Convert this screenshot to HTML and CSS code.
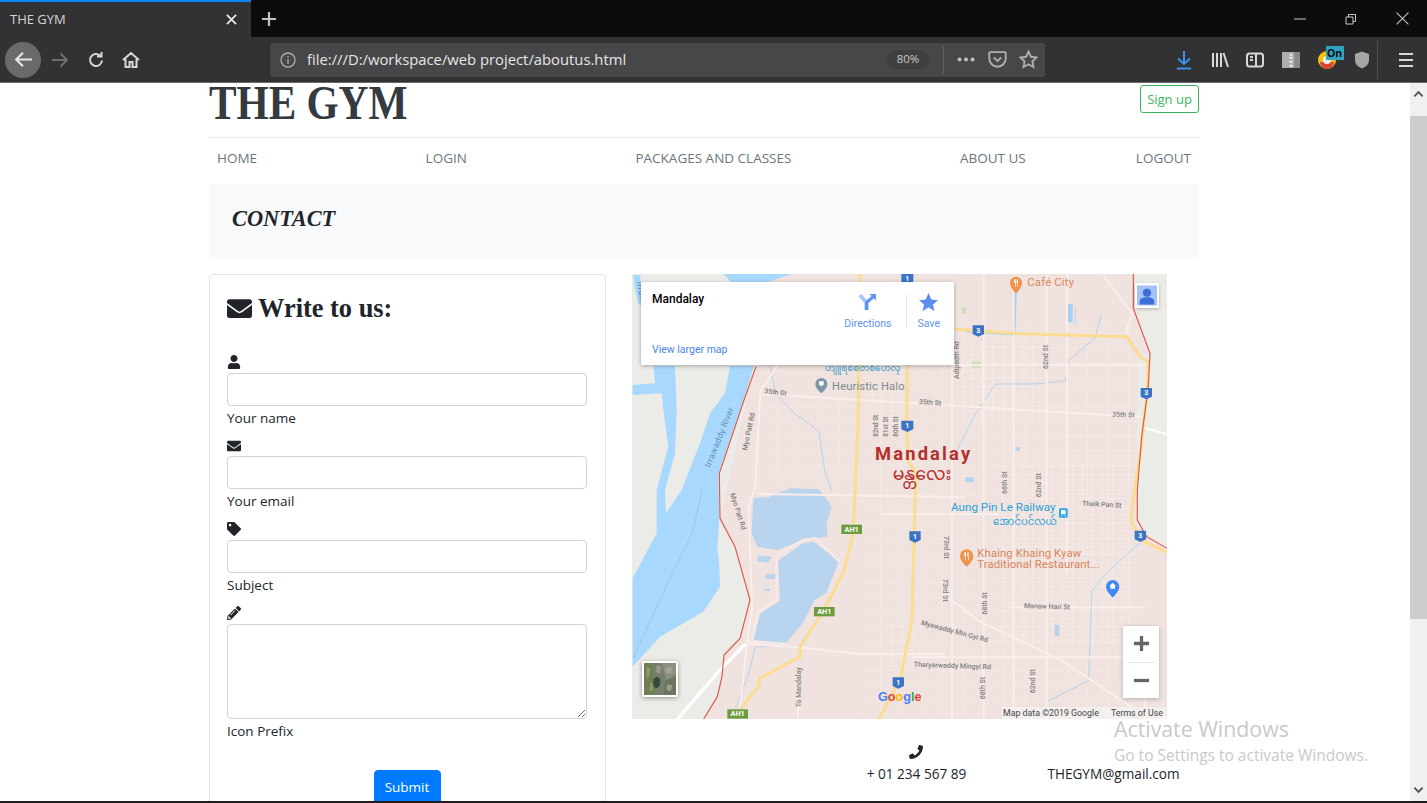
FILE: index.html
```html
<!DOCTYPE html>
<html lang="en">
<head>
<meta charset="utf-8">
<title>THE GYM</title>
<link rel="stylesheet" href="styles.css">
</head>
<body>
<div class="browser">
  <div class="tabbar">
    <div class="tab">
      <span class="tab-title">THE GYM</span>
      <svg class="ico tab-x" viewBox="0 0 12 12"><path d="M1 1l10 10M11 1L1 11"/></svg>
    </div>
    <svg class="ico new-tab" viewBox="0 0 16 16"><path d="M8 1v14M1 8h14"/></svg>
    <div class="win-controls">
      <svg class="ico win" viewBox="0 0 12 12"><path d="M0 6h12"/></svg>
      <svg class="ico win" viewBox="0 0 12 12"><path d="M1 4h7v7H1zM3.500 4V1.500h7v7H8"/></svg>
      <svg class="ico win" viewBox="0 0 12 12"><path d="M.5.500l11 11M11.500.500l-11 11"/></svg>
    </div>
  </div>
  <div class="toolbar">
    <div class="back-btn"><svg class="ico back" viewBox="0 0 18 16"><path d="M17 8H2M8.500 1.500L2 8l6.500 6.500"/></svg></div>
    <svg class="ico nav-ico dim" viewBox="0 0 18 16"><path d="M1 8h15M9.500 1.500L16 8l-6.500 6.500"/></svg>
    <svg class="ico nav-ico" viewBox="0 0 18 18"><path d="M15 9.500A6 6 0 1 1 13 4.500M14.500 1v4.500H10"/></svg>
    <svg class="ico nav-ico home" viewBox="0 0 18 18"><path d="M1 9l8-7 8 7M3.500 8v8h4v-5h3v5h4V8"/></svg>
    <div class="urlbar">
      <svg class="ico info" viewBox="0 0 16 16"><circle cx="8" cy="8" r="7"/><path d="M8 7v5M8 4v1.500"/></svg>
      <span class="url">file:///D:/workspace/web project/aboutus.html</span>
      <span class="zoom-pill">80%</span>
      <span class="url-sep"></span>
      <svg class="dots" viewBox="0 0 18 4"><circle cx="2.500" cy="2" r="2"/><circle cx="9" cy="2" r="2"/><circle cx="15.500" cy="2" r="2"/></svg>
      <svg class="ico url-ico" viewBox="0 0 18 18"><path d="M2 2h14a.8.800 0 0 1 .8.800V8a7.800 7.800 0 0 1-15.600 0V2.800A.8.800 0 0 1 2 2zM5.500 7L9 10.500 12.500 7"/></svg>
      <svg class="ico url-ico" viewBox="0 0 18 18"><path d="M9 1.500l2.300 4.900 5.300.7-3.900 3.700 1 5.300L9 13.500l-4.700 2.600 1-5.300-3.900-3.700 5.300-.7z"/></svg>
    </div>
    <div class="tools">
      <svg class="ico tool blue" viewBox="0 0 18 20"><path d="M9 1v13M3 8.500L9 14l6-5.500M2 18.500h14"/></svg>
      <svg class="ico tool" viewBox="0 0 18 18"><path d="M2 2v14M6 2v14M10 2v14M12.500 2L17 16"/></svg>
      <svg class="ico tool" viewBox="0 0 18 18"><rect x="1" y="2.500" width="16" height="13" rx="2.500"/><path d="M10 2.500v13M4 6h3M4 9h3"/></svg>
      <svg class="tool" viewBox="0 0 18 18"><rect y="1" width="18" height="16" fill="#b0b0b0"/><path d="M12 1h6v16h-6z" fill="#8c8c8c"/><path d="M8 3h2v1.500H8zM7 6h4l-2 2zM7 10h4l-2 2zM7 14h4l-2 2z" fill="#fff"/></svg>
      <span class="ext">
        <svg class="tool" viewBox="0 0 18 18"><circle cx="9" cy="9" r="9" fill="#f4c20d"/><path d="M2 11a7 7 0 0 0 14 0z" fill="#db4437"/><circle cx="9" cy="9" r="4" fill="#eee"/></svg>
        <span class="ext-badge">On</span>
      </span>
      <svg class="tool" viewBox="0 0 18 18"><path d="M9 .500l7 2.500v6c0 4-3 7-7 8.500C5 16 2 13 2 9V3z" fill="#a6a6a6"/></svg>
      <span class="tool-sep"></span>
      <svg class="ico tool last" viewBox="0 0 18 18"><path d="M2 3h14M2 9h14M2 15h14"/></svg>
    </div>
  </div>

  <div class="viewport">
    <div class="page">
      <div class="container">
        <header class="site-head">
          <h1 class="brand"><span class="brand-text">THE GYM</span></h1>
          <a class="signup">Sign up</a>
        </header>
        <nav class="site-nav">
          <div class="nav-main"><a>HOME</a><a>LOGIN</a><a>PACKAGES AND CLASSES</a><a>ABOUT US</a></div>
          <a>LOGOUT</a>
        </nav>
        <div class="jumbo"><h2>CONTACT</h2></div>
        <div class="contact-row">
          <section class="form-card">
            <h3 class="form-title">
              <svg class="fa fa-env" viewBox="0 0 512 512"><path d="M502.300 190.800c3.900-3.100 9.700-.2 9.700 4.700V400c0 26.500-21.500 48-48 48H48c-26.500 0-48-21.500-48-48V195.600c0-5 5.700-7.800 9.700-4.700 22.400 17.400 52.100 39.500 154.100 113.600 21.100 15.400 56.700 47.800 92.200 47.600 35.700.3 72-32.800 92.300-47.600 102-74.100 131.600-96.300 154-113.700zM256 320c23.200.4 56.600-29.200 73.400-41.400 132.700-96.300 142.800-104.700 173.400-128.700 5.800-4.500 9.200-11.500 9.200-18.900v-19c0-26.500-21.500-48-48-48H48C21.500 64 0 85.500 0 112v19c0 7.400 3.400 14.300 9.200 18.900 30.600 23.900 40.700 32.400 173.400 128.700 16.800 12.200 50.200 41.800 73.400 41.400z"/></svg>
              Write to us:
            </h3>
            <div class="field">
              <svg class="fa" viewBox="0 0 448 512"><path d="M224 256c70.700 0 128-57.300 128-128S294.700 0 224 0 96 57.300 96 128s57.300 128 128 128zm89.600 32h-16.700c-22.200 10.200-46.900 16-72.900 16s-50.600-5.800-72.900-16h-16.700C60.200 288 0 348.200 0 422.400V464c0 26.500 21.500 48 48 48h352c26.500 0 48-21.500 48-48v-41.600c0-74.200-60.200-134.400-134.400-134.400z"/></svg>
              <input class="control" type="text">
              <label class="cap">Your name</label>
            </div>
            <div class="field">
              <svg class="fa" viewBox="0 0 512 512"><path d="M502.300 190.800c3.900-3.100 9.700-.2 9.700 4.700V400c0 26.500-21.500 48-48 48H48c-26.500 0-48-21.500-48-48V195.600c0-5 5.700-7.800 9.700-4.700 22.400 17.400 52.100 39.500 154.100 113.600 21.100 15.400 56.700 47.800 92.200 47.600 35.700.3 72-32.800 92.300-47.600 102-74.100 131.600-96.300 154-113.700zM256 320c23.200.4 56.600-29.200 73.400-41.400 132.700-96.300 142.800-104.700 173.400-128.700 5.800-4.500 9.200-11.500 9.200-18.900v-19c0-26.500-21.500-48-48-48H48C21.500 64 0 85.500 0 112v19c0 7.400 3.400 14.300 9.200 18.900 30.600 23.900 40.700 32.400 173.400 128.700 16.800 12.200 50.200 41.800 73.400 41.400z"/></svg>
              <input class="control" type="text">
              <label class="cap">Your email</label>
            </div>
            <div class="field">
              <svg class="fa" viewBox="0 0 512 512"><path d="M0 252.118V48C0 21.490 21.490 0 48 0h204.118a48 48 0 0 1 33.941 14.059l211.882 211.882c18.745 18.745 18.745 49.137 0 67.882L293.823 497.941c-18.745 18.745-49.137 18.745-67.882 0L14.059 286.059A48 48 0 0 1 0 252.118zM112 64c-26.510 0-48 21.490-48 48s21.490 48 48 48 48-21.490 48-48-21.490-48-48-48z"/></svg>
              <input class="control" type="text">
              <label class="cap">Subject</label>
            </div>
            <div class="field field-area">
              <svg class="fa" viewBox="0 0 512 512"><path d="M497.900 142.100l-46.100 46.100c-4.700 4.700-12.300 4.700-17 0l-111-111c-4.700-4.700-4.700-12.300 0-17l46.100-46.100c18.700-18.700 49.100-18.700 67.900 0l60.100 60.100c18.800 18.700 18.800 49.100 0 67.900zM284.200 99.800L21.600 362.400.4 483.900c-2.900 16.400 11.400 30.600 27.800 27.800l121.500-21.300 262.600-262.600c4.700-4.700 4.700-12.300 0-17l-111-111c-4.800-4.700-12.400-4.700-17.100 0zM124.100 339.900c-5.500-5.500-5.500-14.300 0-19.800l154-154c5.500-5.500 14.300-5.500 19.800 0s5.500 14.300 0 19.800l-154 154c-5.500 5.500-14.300 5.500-19.800 0zM88 424h48v36.300l-64.500 11.300-31.100-31.100L51.700 376H88v48z"/></svg>
              <textarea class="control area"></textarea>
              <label class="cap">Icon Prefix</label>
            </div>
            <div class="submit-row"><button class="submit" type="button">Submit</button></div>
          </section>

          <section class="map-col">
            <div class="map">
              <svg class="map-svg" viewBox="0 0 1605 1335">
                <defs>
                  <pattern id="grid" width="62" height="44" patternUnits="userSpaceOnUse">
                    <path d="M0 0V44M0 0H62" stroke="#f8ece9" stroke-width="3" fill="none"/>
                  </pattern>
                  <pattern id="fine" width="30" height="24" patternUnits="userSpaceOnUse">
                    <path d="M0 0V24M0 0H30" stroke="#f9eeeb" stroke-width="2.500" fill="none"/>
                  </pattern>
                </defs>
                <rect width="1605" height="1335" fill="#efe2df"/>
                <!-- grey river plain, west -->
                <path d="M0 0H420L366 278L264 733L309 818L354 978L324 1093L276 1143L259 1268L215 1335H0z" fill="#ebebe8"/>
                <!-- grey plain, east -->
                <path d="M1509 0H1605V820L1548 785L1516 738V240L1554 238L1509 100z" fill="#ebebe8"/>
                <!-- street grids -->
                <rect x="690" y="150" width="830" height="1180" fill="url(#grid)"/>
                <rect x="400" y="370" width="280" height="260" fill="url(#grid)"/>
                <rect x="1100" y="560" width="400" height="560" fill="url(#fine)"/>
                <rect x="990" y="200" width="240" height="250" fill="url(#fine)"/>
                <rect x="770" y="1050" width="75" height="130" fill="url(#fine)"/>
                <rect x="700" y="330" width="90" height="140" fill="url(#fine)"/>
                <rect x="1300" y="480" width="220" height="220" fill="url(#grid)"/>
                <!-- river and channels -->
                <g transform="translate(-6,648)">
                  <path d="M70 -372H372L340 -270L310 -180L265 -50L268 85L262 170L268 230L270 290L220 365L90 440L8 530V265L80 130L80 0L115 -130L100 -240L95 -290L8 -285V-315L75 -320z" fill="#a9d8fe"/>
                  <path d="M135 -372H300L285 -290L240 -230L210 -140L155 0L108 70L105 0L135 -110L140 -240z" fill="#ebebe8"/>
                </g>
                <path d="M274 0H480L400 26H300z" fill="#a9d8fe"/>
                <path d="M4 3H24L32 70L29 98L18 85L8 40z" fill="#a9d8fe"/>
                <!-- lakes -->
                <g transform="translate(-6,648)" fill="#b8d4ee" stroke="#b8d4ee" stroke-width="8" stroke-linejoin="round">
                  <path d="M374 29L420 24L480 -1L566 2L601 50L586 100L588 136L520 146L440 176L384 166L369 130z"/>
                  <path d="M449 214L520 164L550 159L621 215L586 306L551 326L516 396L466 456L374 446L394 374L454 334z"/>
                </g>
                <g transform="translate(-6,648)" fill="#b8d4ee">
                  <path d="M385 198L425 200L415 218L382 215zM408 252L438 252L436 268L406 266zM403 296L420 296L420 302L403 302z"/>
                </g>
                <!-- small blue creeks -->
                <g fill="none" stroke="#b6d3ec" stroke-width="3">
                  <path d="M414 270L430 360L490 420L560 470L580 600L600 650"/>
                  <path d="M1150 40L1146 180L1000 170" stroke="#a9cfee" stroke-width="9"/>
                  <path d="M1330 100V150M1408 120L1390 190L1310 260L1300 320L1210 330L1090 330L1030 420L960 560"/>
                  <path d="M1530 800L1420 900L1380 950L1370 1220L1250 1280L1230 1330"/>
                  <path d="M300 1330L350 1200L370 1120L460 1110"/>
                </g>
                <rect x="1308" y="90" width="14" height="55" fill="#a9cfee"/>
                <rect x="1000" y="610" width="26" height="14" fill="#b6d3ec"/>
                <rect x="1150" y="520" width="14" height="10" fill="#b6d3ec"/>
                <rect x="1268" y="1052" width="14" height="34" fill="#b6d3ec"/>
                <rect x="990" y="100" width="12" height="20" fill="#cfe0b8"/>
                <rect x="1020" y="262" width="28" height="20" fill="#cfe0b8"/>
                <rect x="1040" y="392" width="18" height="12" fill="#cfe0b8"/>
                <!-- main streets -->
                <g fill="none" stroke="#faeeeb" stroke-width="6">
                  <path d="M700 273H1540M390 360L1540 430"/>
                  <path d="M960 200V1335M1055 0V1335M1145 40V1335M1244 0V1335M1305 0V900M1412 0L1500 120L1480 180"/>
                  <path d="M320 1335L345 1110L360 1000L350 700L370 640L385 350L440 270"/>
                  <path d="M350 1110L500 1120L680 1140L940 1140"/>
                  <path d="M375 660L1000 670M750 720H1100M1130 1000H1540M840 1150H1540"/>
                  <path d="M935 960L1040 1040L1290 1160L1500 1300"/>
                  <path d="M498 1180V1335"/>
                  <path d="M1540 1110V1335"/>
                  <path d="M134 1338L264 1188L340 1110" stroke="#fff" stroke-width="10"/>
                  <path d="M1530 460L1605 480" stroke="#fff" stroke-width="6"/>
                </g>
                <!-- lake rim roads -->
                <g transform="translate(-6,648)" fill="none" stroke="#f7e9e6" stroke-width="8">
                  <path d="M440 195L520 150L555 145L630 215M440 195V330L385 365L365 455L470 462"/>
                </g>
                <!-- highways -->
                <g fill="none" stroke="#fcdc90" stroke-width="9" stroke-linejoin="round">
                  <path d="M684 0L678 450L664 778L634 898L564 1028L504 1118V1148L384 1213L379 1238L314 1318L300 1335"/>
                  <path d="M830 0L824 450L829 558L854 608L850 648L840 1038L808 1200L778 1268L740 1335"/>
                  <path d="M970 166L1144 178L1484 188L1524 248L1549 263L1544 368L1524 548L1504 670L1496 740L1530 800L1605 835"/>
                </g>
                <!-- district border -->
                <g fill="none" stroke="#dc5a4c" stroke-width="3.500">
                  <path d="M1504 0V103L1554 238L1549 338L1529 488L1516 648V738L1544 788L1605 823"/>
                  <path d="M372 278L336 378L306 468L262 598L264 733L309 818L354 978L324 1093L276 1143L270 1208L256 1268L215 1335"/>
                </g>
                <!-- ferry line -->
                <path d="M210 648L180 780L130 880L4 1150" fill="none" stroke="#9a9a9a" stroke-width="2" stroke-dasharray="5 4"/>

                <!-- labels -->
                <g class="m-road">
                  <text x="396" y="358" transform="rotate(6 396 358)">35th St</text>
                  <text x="860" y="390" transform="rotate(4 860 390)">35th St</text>
                  <text x="1440" y="428" transform="rotate(2 1440 428)">35th St</text>
                  <text x="345" y="530" transform="rotate(-78 345 530)">Myo Patt Rd</text>
                  <text x="294" y="660" transform="rotate(72 294 660)">Myo Patt Rd</text>
                  <text x="738" y="488" class="m-tiny" transform="rotate(-90 738 488)">82nd St</text>
                  <text x="768" y="488" class="m-tiny" transform="rotate(-90 768 488)">81st St</text>
                  <text x="798" y="488" class="m-tiny" transform="rotate(-90 798 488)">80th St</text>
                  <text x="980" y="315" transform="rotate(-90 980 315)">Adipadih Rd</text>
                  <text x="1248" y="285" transform="rotate(-90 1248 285)">62nd St</text>
                  <text x="1126" y="660" transform="rotate(-90 1126 660)">66th St</text>
                  <text x="1226" y="670" transform="rotate(-90 1226 670)">62nd St</text>
                  <text x="936" y="786" transform="rotate(90 936 786)">73rd St</text>
                  <text x="932" y="915" transform="rotate(90 932 915)">73rd St</text>
                  <text x="1064" y="1022" transform="rotate(-90 1064 1022)">68th St</text>
                  <text x="1058" y="1276" transform="rotate(-90 1058 1276)">68th St</text>
                  <text x="1208" y="1258" transform="rotate(-90 1208 1258)">62nd St</text>
                  <text x="1350" y="695" transform="rotate(3 1350 695)">Theik Pan St</text>
                  <text x="1176" y="1002" transform="rotate(2 1176 1002)">Manaw Hari St</text>
                  <text x="866" y="1052" transform="rotate(15 866 1052)">Myawaddy Min Gyi Rd</text>
                  <text x="845" y="1178" transform="rotate(2 845 1178)">Tharyarwaddy Mingyi Rd</text>
                  <text x="508" y="1300" transform="rotate(-90 508 1300)">To Mandalay</text>
                </g>
                <text class="m-river" x="234" y="582" transform="rotate(-68 234 582)">Irrawaddy River</text>
                <text class="m-river" x="15" y="24" transform="rotate(80 15 24)">Irrawaddy</text>
                <text class="m-halo-my" x="579" y="292">ဟျူရစ်စတစ်ဟေလို</text>
                <text class="m-poi-gray" x="600" y="348">Heuristic Halo</text>
                <path d="M550 330a18 18 0 0 1 36 0c0 14-18 28-18 28s-18-14-18-28z" fill="#7b97a6"/>
                <path d="M561 322h14v12h-5l-2 5-2-5h-5z" fill="#fff"/>
                <text class="m-city" x="729" y="558">Mandalay</text>
                <text class="m-city-my" x="782" y="618">မန္တလေး</text>
                <text class="m-cafe" x="1186" y="36">Café City</text>
                <path d="M1134 26a18 18 0 0 1 36 0c0 16-18 32-18 32s-18-16-18-32z" fill="#f2924a"/>
                <path d="M1146 16v10h3v12h2V16zM1155 16h3v22h-2V27h-3z" fill="#fff"/>
                <text class="m-rail" x="957" y="712">Aung Pin Le Railway</text>
                <text class="m-rail-my" x="1083" y="752">အောင်ပင်လယ်</text>
                <rect x="1281" y="703" width="26" height="28" rx="4" fill="#27a7e0"/>
                <rect x="1287" y="708" width="14" height="13" rx="2" fill="#fff"/>
                <path d="M1288 723h3l-2 4h-2zM1297 723h3l2 4h-2z" fill="#fff"/>
                <text class="m-food" x="1036" y="848">Khaing Khaing Kyaw</text>
                <text class="m-food" x="1036" y="882">Traditional Restaurant...</text>
                <path d="M984 846a20 20 0 0 1 40 0c0 16-20 32-20 32s-20-16-20-32z" fill="#f2924a"/>
                <path d="M997 835v11h3v13h2V835zM1007 835h3v24h-2V847h-3z" fill="#fff"/>
                <path d="M1422 938a20 20 0 0 1 40 0c0 14-20 32-20 32s-20-18-20-32z" fill="#4285f4"/>
                <path d="M1442 926l10 10h-3v8h-14v-8h-3z" fill="#fff"/>

                <!-- shields -->
                <g class="m-shield">
                  <path d="M808 -2h36v26l-18 8-18-8z"/><text x="826" y="20">1</text>
                  <path d="M1022 154h34v26l-17 8-17-8z"/><text x="1039" y="176">3</text>
                  <path d="M1526 342h34v26l-17 8-17-8z"/><text x="1543" y="364">3</text>
                  <path d="M808 440h36v26l-18 8-18-8z"/><text x="826" y="462">1</text>
                  <path d="M832 772h34v26l-17 8-17-8z"/><text x="849" y="794">1</text>
                  <path d="M782 1210h34v26l-17 8-17-8z"/><text x="799" y="1232">1</text>
                  <path d="M1508 770h34v26l-17 8-17-8z"/><text x="1525" y="792">3</text>
                </g>
                <g class="m-ah">
                  <rect x="628" y="752" width="62" height="28"/><text x="659" y="773">AH1</text>
                  <rect x="546" y="999" width="62" height="28"/><text x="577" y="1020">AH1</text>
                  <rect x="286" y="1306" width="62" height="28"/><text x="317" y="1327">AH1</text>
                </g>
                <text class="m-google" x="738" y="1281"><tspan fill="#4285f4">G</tspan><tspan fill="#ea4335">o</tspan><tspan fill="#fbbc05">o</tspan><tspan fill="#4285f4">g</tspan><tspan fill="#34a853">l</tspan><tspan fill="#ea4335">e</tspan></text>
              </svg>

              <div class="map-card">
                <div class="map-card-top">
                  <span class="place">Mandalay</span>
                  <div class="map-action">
                    <svg class="dir-ico" viewBox="0 0 20 20"><path d="M2 2l7 8v8" fill="none" stroke="#a8c7fa" stroke-width="4"/><path d="M9 18v-8l7-6" fill="none" stroke="#5f95f5" stroke-width="3.500"/><path d="M12 1h7v7z" fill="#5f95f5"/></svg>
                    <span>Directions</span>
                  </div>
                  <span class="map-sep"></span>
                  <div class="map-action save">
                    <svg class="dir-ico" viewBox="0 0 20 20"><path d="M10 0l3 6.800 7 .7-5.300 4.700 1.600 7L10 15l-6.300 4.200 1.600-7L0 7.500l7-.7z" fill="#5f8cf0"/></svg>
                    <span>Save</span>
                  </div>
                </div>
                <a class="larger">View larger map</a>
              </div>

              <div class="street-view">
                <svg viewBox="0 0 22 22"><rect width="22" height="22" fill="#a5c1f7"/><circle cx="11" cy="8" r="4.500" fill="#3c6fd8"/><path d="M3 21v-3c0-4 4-5 8-5s8 1 8 5v3z" fill="#3c6fd8"/></svg>
              </div>

              <div class="sat-thumb">
                <svg viewBox="0 0 36 36"><rect width="36" height="36" fill="#75806a"/><path d="M0 0h9l4 36H0z" fill="#6e7f55"/><path d="M3 4l4 2-1 9-3 2zM7 22l3 1v9l-4-2z" fill="#8f9a66"/><path d="M11 18c4-5 9-1 7 6s-10 5-7-6z" fill="#37493c"/><path d="M20 0h16v13L25 19z" fill="#8b8f80"/><path d="M24 20l12-4v20H22z" fill="#6a7560"/><circle cx="28" cy="8" r="4" fill="#a2a396"/><path d="M14 3l5 1-1 8-4-2zM26 24l6 1-2 7-5-2z" fill="#9b9c8c"/></svg>
              </div>

              <div class="map-zoom">
                <svg class="zoom-ico" viewBox="0 0 18 18"><path d="M9 1v16M1 9h16"/></svg>
                <span class="zoom-line"></span>
                <svg class="zoom-ico" viewBox="0 0 18 18"><path d="M1 9h16"/></svg>
              </div>

              <div class="map-foot"><span>Map data ©2019 Google</span><span>Terms of Use</span></div>
            </div>

            <div class="reach">
              <div class="reach-item">
                <svg class="fa phone" viewBox="0 0 512 512"><path d="M493.400 24.600l-104-24c-11.300-2.600-22.900 3.300-27.500 13.900l-48 112c-4.200 9.800-1.400 21.300 6.900 28l60.600 49.600c-36 76.700-98.900 140.500-177.200 177.200l-49.600-60.600c-6.800-8.300-18.200-11.100-28-6.900l-112 48C3.900 366.500-2 378.100.6 389.400l24 104C27.100 504.200 36.700 512 48 512c256.100 0 464-207.500 464-464 0-11.200-7.700-20.900-18.600-23.400z"/></svg>
                <span>+ 01 234 567 89</span>
              </div>
              <div class="reach-item">
                <span class="fa-blank"></span>
                <span>THEGYM@gmail.com</span>
              </div>
            </div>
          </section>
        </div>
      </div>
      <div class="activate">
        <div class="act-1">Activate Windows</div>
        <div class="act-2">Go to Settings to activate Windows.</div>
      </div>
    </div>
    <div class="scrollbar">
      <svg class="sb-arrow" viewBox="0 0 12 8"><path d="M1.500 6.500L6 2l4.500 4.500"/></svg>
      <div class="sb-thumb"></div>
      <div class="sb-rest"></div>
      <svg class="sb-arrow" viewBox="0 0 12 8"><path d="M1.500 1.500L6 6l4.500-4.500"/></svg>
    </div>
  </div>
  <div class="taskbar-edge"></div>
</div>
</body>
</html>
```
FILE: styles.css
```css
* { box-sizing: border-box; }
html, body { margin: 0; height: 100%; overflow: hidden; background: #fff; }
body { font-family: "Open Sans", "Noto Sans", sans-serif; color: #212529; }

.browser { width: 1427px; height: 803px; display: flex; flex-direction: column; }
.ico { fill: none; stroke: currentColor; stroke-width: 2; }

/* tab strip */
.tabbar { height: 37px; flex: none; background: #0c0c0d; display: flex; align-items: center; }
.tab { width: 251px; height: 37px; background: #323234; border-top: 2px solid #0a84ff; display: flex; align-items: center; justify-content: space-between; padding: 0 14px 0 10px; }
.tab-title { font-size: 13px; color: #d4d4d5; padding-bottom: 2px; }
.tab-x { width: 11px; height: 11px; color: #f0f0f0; stroke-width: 1.800; }
.new-tab { width: 16px; height: 16px; margin-left: 10px; color: #c4c4c4; stroke-width: 2.200; }
.win-controls { margin-left: auto; display: flex; gap: 39px; padding-right: 18px; align-items: center; }
.win { width: 12px; height: 12px; color: #c8c8c8; stroke-width: 1; }
.win:last-child { width: 13px; height: 13px; }

/* toolbar */
.toolbar { height: 46px; flex: none; background: #323234; border-bottom: 1px solid #6b6b6b; display: flex; align-items: center; padding: 0 0 0 4px; color: #d8d8d8; }
.back-btn { width: 36px; height: 36px; border-radius: 50%; background: #6a6a6b; display: flex; align-items: center; justify-content: center; color: #e6e6e6; margin-left: 1px; flex: none; }
.back { width: 19px; height: 17px; stroke-width: 2; }
.nav-ico { width: 18px; height: 18px; margin-left: 18px; flex: none; }
.back-btn + .nav-ico { margin-left: 10px; }
.nav-ico.home { margin-left: 17px; }
.dim { color: #6e6e70; }
.urlbar { margin-left: 130px; width: 775px; flex: none; height: 34px; background: #474749; border-radius: 3px; display: flex; align-items: center; padding: 0 7px 0 10px; color: #aeaeb0; }
.info { width: 16px; height: 16px; stroke-width: 1.300; flex: none; }
.url { margin-left: 11px; font-size: 14.800px; color: #e6e6e6; white-space: nowrap; padding-bottom: 2px; }
.zoom-pill { margin-left: auto; width: 42px; text-align: center; font-size: 11.500px; color: #c8c8c8; border-radius: 10px; background: #3f3f41; height: 19px; line-height: 18px; flex: none; }
.url-sep { width: 1px; height: 28px; background: #606062; margin: 0 13px 0 14px; flex: none; }
.dots { width: 18px; height: 5px; fill: #c0c0c0; flex: none; }
.url-ico { width: 19px; height: 19px; margin-left: 13px; stroke-width: 1.800; flex: none; }
.url-ico + .url-ico { margin-left: 12px; }
.tools { margin-left: auto; padding-right: 12px; display: flex; align-items: center; }
.tool { width: 18px; height: 18px; margin-right: 17.700px; flex: none; display: block; }
.tool.last { margin-right: 0; }
.blue { color: #3b93e8; height: 20px; }
.ext { position: relative; display: block; height: 18px; }
.ext-badge { position: absolute; left: 8px; top: -5px; width: 18px; height: 14px; background: #2fa3c0; color: #0a0a0a; font-size: 10.500px; font-weight: 700; line-height: 14px; text-align: center; }
.tool-sep { width: 1px; height: 38px; background: #4e4e50; margin: 0 19px 0 -12px; flex: none; }

/* page shell */
.viewport { flex: 1; min-height: 0; display: flex; }
.page { flex: 1; min-width: 0; position: relative; overflow: hidden; }
.taskbar-edge { height: 2px; flex: none; background: #1c1c1c; }

.scrollbar { width: 17px; flex: none; background: #f0f0f0; display: flex; flex-direction: column; align-items: center; }
.sb-arrow { width: 11px; height: 8px; margin: 7px 0; fill: none; stroke: #505050; stroke-width: 2; flex: none; }
.sb-thumb { width: 17px; height: 503px; margin-top: 11px; background: #cdcdcd; flex: none; }
.sb-rest { flex: 1; }

/* site */
.container { width: 990px; margin-left: 209px; }
.site-head { height: 55px; border-bottom: 1px solid #e9ecef; display: flex; justify-content: space-between; align-items: flex-start; }
.brand { margin: 0; height: 54px; font-family: "Liberation Serif", serif; font-weight: 700; font-size: 48px; line-height: 40px; color: #343a40; white-space: nowrap; }
.brand-text { display: inline-block; transform: scaleX(.86); transform-origin: left center; }
.signup { margin-top: 2px; width: 59px; height: 28px; border: 1px solid #3cb560; border-radius: 3px; color: #3cb560; font-size: 13px; line-height: 26px; text-align: center; }

.site-nav { height: 46px; display: flex; justify-content: space-between; align-items: flex-start; padding: 11px 8px 0; }
.nav-main { display: flex; gap: 168.500px; }
.site-nav a { font-size: 13.500px; line-height: 18px; color: #6c757d; white-space: nowrap; }

.jumbo { height: 75px; background: #f8f9fa; border-radius: 4px; padding: 0 23px; display: flex; align-items: center; margin-bottom: 15px; }
.jumbo h2 { margin: 0 0 5px; font-family: "Liberation Serif", serif; font-style: italic; font-weight: 700; font-size: 22.400px; color: #212529; }

.contact-row { display: flex; gap: 26px; align-items: flex-start; }

.form-card { width: 397px; flex: none; border: 1px solid #e2e3e5; border-radius: 4px; padding: 16px 18px 40px 17px; }
.form-title { margin: 0 0 30px; height: 34px; display: flex; align-items: center; gap: 6px; font-family: "Liberation Serif", serif; font-weight: 700; font-size: 26.400px; color: #212529; }
.fa { display: block; width: 14px; height: 14px; fill: #212529; }
.fa-env { width: 25px; height: 25px; }
.field { height: 83.700px; display: flex; flex-direction: column; }
.field .fa { flex: none; margin-bottom: 3.800px; }
.field-area { height: auto; }
.control { display: block; width: 100%; height: 33px; border: 1px solid #ced4da; border-radius: 4px; background: #fff; padding: 0; margin: 0; flex: none; }
.area { height: 95px; resize: vertical; }
.cap { font-size: 13.500px; line-height: 24px; height: 24px; color: #212529; }
.submit-row { margin-top: 27px; display: flex; justify-content: center; }
.submit { width: 67px; height: 35px; border: 1px solid #007bff; border-radius: 4px; background: #007bff; color: #fff; font: 13.500px "Open Sans", sans-serif; padding: 0; flex: none; }

.map-col { flex: 1; min-width: 0; }
.map { position: relative; width: 535px; height: 445px; overflow: hidden; background: #efe2df; }
.map-svg { display: block; width: 535px; height: 445px; font-family: Roboto, sans-serif; }
.m-road text { font-size: 21px; fill: #7d7d7d; font-weight: 500; }
.m-road .m-tiny { font-size: 19px; }
.m-river { font-size: 26px; fill: #5a90c0; letter-spacing: 1px; }
.m-poi-gray { font-size: 33.500px; fill: #7d8a90; letter-spacing: .5px; }
.m-halo-my { font-family: "Noto Sans Myanmar", "Noto Sans", sans-serif; font-size: 26.500px; fill: #3fa2d0; }
.m-city { font-size: 55px; font-weight: 700; fill: #b3312c; letter-spacing: 6.500px; }
.m-city-my { font-family: "Noto Sans Myanmar", "Noto Sans", sans-serif; font-size: 52px; fill: #b3312c; }
.m-cafe { font-size: 34px; fill: #d98a5a; letter-spacing: .5px; }
.m-rail { font-size: 35px; fill: #2aa0d6; }
.m-rail-my { font-family: "Noto Sans Myanmar", "Noto Sans", sans-serif; font-size: 30px; fill: #2aa0d6; }
.m-food { font-size: 34px; fill: #d9845a; letter-spacing: .3px; }
.m-shield path { fill: #3b74c4; }
.m-shield text { font-size: 21px; font-weight: 700; fill: #fff; text-anchor: middle; }
.m-ah rect { fill: #6c9c3f; }
.m-ah text { font-size: 22px; font-weight: 700; fill: #fff; text-anchor: middle; }
.m-google { font-family: "Liberation Sans", sans-serif; font-size: 38px; font-weight: 700; }

.map-card { position: absolute; left: 9px; top: 8px; width: 313px; height: 83px; background: #fff; box-shadow: 0 1px 4px rgba(0,0,0,.3); padding: 10px 11px 0; font-family: Roboto, sans-serif; display: flex; flex-direction: column; }
.map-card-top { display: flex; align-items: flex-start; height: 48px; flex: none; }
.place { font-size: 12px; font-weight: 500; color: #000; margin-right: auto; line-height: 14px; }
.map-action { display: flex; flex-direction: column; align-items: center; gap: 5px; font-size: 10.500px; color: #5e94ee; padding-top: 1px; }
.map-action.save { margin-right: 3px; }
.dir-ico { width: 19px; height: 19px; display: block; }
.map-sep { width: 1px; height: 34px; background: #e6e6e6; margin: 2px 11px 0 14px; }
.larger { margin-top: 3px; font-size: 10.500px; color: #4a86e8; }

.street-view { position: absolute; left: 503px; top: 9px; width: 24px; height: 25px; background: #fff; padding: 2px; box-shadow: 0 1px 3px rgba(0,0,0,.25); }
.street-view svg { display: block; width: 100%; height: 100%; }
.sat-thumb { position: absolute; left: 10px; top: 387px; width: 36px; height: 36px; border: 2px solid #fff; border-radius: 2px; box-shadow: 0 1px 4px rgba(0,0,0,.4); overflow: hidden; }
.sat-thumb svg { display: block; width: 100%; height: 100%; }
.map-zoom { position: absolute; left: 491px; top: 352px; width: 36px; height: 72px; background: #fff; box-shadow: 0 1px 4px rgba(0,0,0,.25); display: flex; flex-direction: column; align-items: center; justify-content: space-between; padding: 9px 0; }
.zoom-ico { width: 17px; height: 17px; fill: none; stroke: #666; stroke-width: 3.500; }
.zoom-line { width: 27px; height: 1px; background: #e6e6e6; }
.map-foot { position: absolute; right: 0; bottom: 0; height: 12px; width: 165px; background: rgba(245,245,245,.7); display: flex; justify-content: space-between; padding: 0 4px 0 1px; font: 8.800px/12px Roboto, sans-serif; color: #444; white-space: nowrap; }

.reach { display: grid; grid-template-columns: 197px 197px; margin: 26px 0 0 186px; }
.reach-item { display: flex; flex-direction: column; align-items: center; font-size: 13.600px; color: #212529; white-space: nowrap; gap: 6px; line-height: 18px; }
.reach-item .phone { width: 14px; height: 14px; margin-right: 2px; }
.fa-blank { height: 14px; }

.activate { position: absolute; left: 1114px; top: 632px; color: #c9c9c9; pointer-events: none; white-space: nowrap; }
.act-1 { font-size: 21.300px; line-height: 28px; }
.act-2 { font-size: 15.500px; line-height: 24px; }
```
